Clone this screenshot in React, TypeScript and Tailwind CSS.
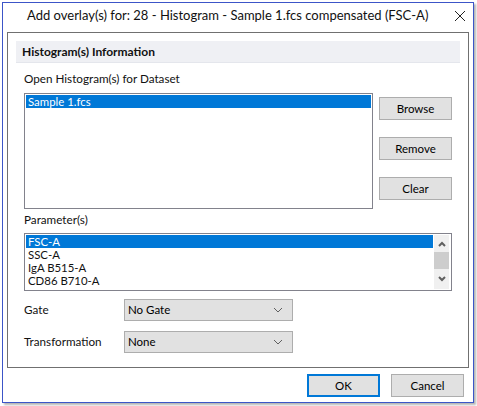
import React from "react";

const font = "font-['Lato','Open_Sans',sans-serif]";

const SideButton = ({ label }: { label: string }) => (
  <button className="h-[23px] w-[73px] border border-[#adadad] bg-[#e1e1e1] text-[11.5px] leading-none text-black">
    {label}
  </button>
);

const Chevron = () => (
  <svg width="10" height="6" viewBox="0 0 10 6" fill="none" stroke="#606060" strokeWidth="1">
    <path d="M1 1l4 4 4-4" />
  </svg>
);

const Select = ({ value }: { value: string }) => (
  <div className="flex h-[22px] w-[169px] items-center justify-between border border-[#adadad] bg-[#e1e1e1] pl-[3px] pr-[9px] text-[11.5px] text-black">
    <span>{value}</span>
    <Chevron />
  </div>
);

const App = () => {
  return (
    <div className={`h-[406px] w-[477px] overflow-hidden bg-white pl-[2px] pt-[2px] ${font}`}>
      <div className="flex h-[401px] w-[472px] flex-col border border-[#3c55c8] bg-white pl-[4px] pr-[3px] shadow-[2px_2px_2px_#b4b4b4]">
        <div className="flex h-[29px] shrink-0 items-center justify-between pb-[3px] pl-[20px] pr-[4px] text-[13px] text-[#111]">
          <span>Add overlay(s) for: 28 - Histogram - Sample 1.fcs compensated (FSC-A)</span>
          <svg width="12" height="12" viewBox="0 0 12 12" fill="none" stroke="#222" strokeWidth="1">
            <path d="M1 1l10 10M11 1L1 11" />
          </svg>
        </div>

        <div className="flex h-[336px] w-[462px] shrink-0 flex-col border border-[#707070] px-[8px] pt-[8px]">
          <div className="flex h-[22px] w-[444px] items-center border-b border-[#e4e6ec] bg-[#eff0f4] pl-[6px] text-[12px] font-bold text-[#111]">
            Histogram(s) Information
          </div>

          <div className="pl-[8px]">
            <div className="mt-[7px] h-[17px] text-[11.7px] leading-[17px] text-[#111]">Open Histogram(s) for Dataset</div>
            <div className="mt-[6px] flex gap-[6px]">
              <div className="h-[116px] w-[349px] border border-[#82828c] p-[1px]">
                <div className="h-[13px] bg-[#0078d7] pl-[2px] text-[11.4px] leading-[13px] text-white">Sample 1.fcs</div>
              </div>
              <div className="flex flex-col gap-[17px] pt-[4px]">
                <SideButton label="Browse" />
                <SideButton label="Remove" />
                <SideButton label="Clear" />
              </div>
            </div>

            <div className="mt-[2px] h-[17px] text-[11.7px] leading-[17px] text-[#111]">Parameter(s)</div>
            <div className="mt-[5px] flex h-[58px] w-[428px] border border-[#82828c] py-[1px] pl-[1px] pr-[2px]">
              <div className="flex-1 text-[11.4px] leading-[13px] text-[#111]">
                <div className="h-[13px] bg-[#0078d7] pl-[2px] text-white">FSC-A</div>
                <div className="pl-[2px]">SSC-A</div>
                <div className="pl-[2px]">IgA B515-A</div>
                <div className="pl-[2px]">CD86 B710-A</div>
              </div>
              <div className="ml-[1px] flex w-[15px] flex-col bg-[#f0f0f0]">
                <div className="flex h-[17px] items-center justify-center">
                  <svg width="8" height="6" viewBox="0 0 8 6" fill="none" stroke="#606060" strokeWidth="2">
                    <path d="M1 5l3-3 3 3" />
                  </svg>
                </div>
                <div className="h-[17px] bg-[#cdcdcd]" />
                <div className="flex flex-1 items-center justify-center">
                  <svg width="8" height="6" viewBox="0 0 8 6" fill="none" stroke="#606060" strokeWidth="2">
                    <path d="M1 1l3 3 3-3" />
                  </svg>
                </div>
              </div>
            </div>

            <div className="mt-[8px] flex items-center">
              <span className="w-[100px] text-[11.7px] text-[#111]">Gate</span>
              <Select value="No Gate" />
            </div>
            <div className="mt-[10px] flex items-center">
              <span className="w-[100px] text-[11.7px] text-[#111]">Transformation</span>
              <Select value="None" />
            </div>
          </div>
        </div>

        <div className="flex justify-end gap-[11px] pr-[6px] pt-[6px]">
          <button className="h-[23px] w-[73px] border-2 border-[#0078d7] bg-[#e1e1e1] text-[11.5px] text-black">OK</button>
          <button className="h-[23px] w-[73px] border border-[#adadad] bg-[#e1e1e1] text-[11.5px] text-black">Cancel</button>
        </div>
      </div>
    </div>
  );
};

export default App;
